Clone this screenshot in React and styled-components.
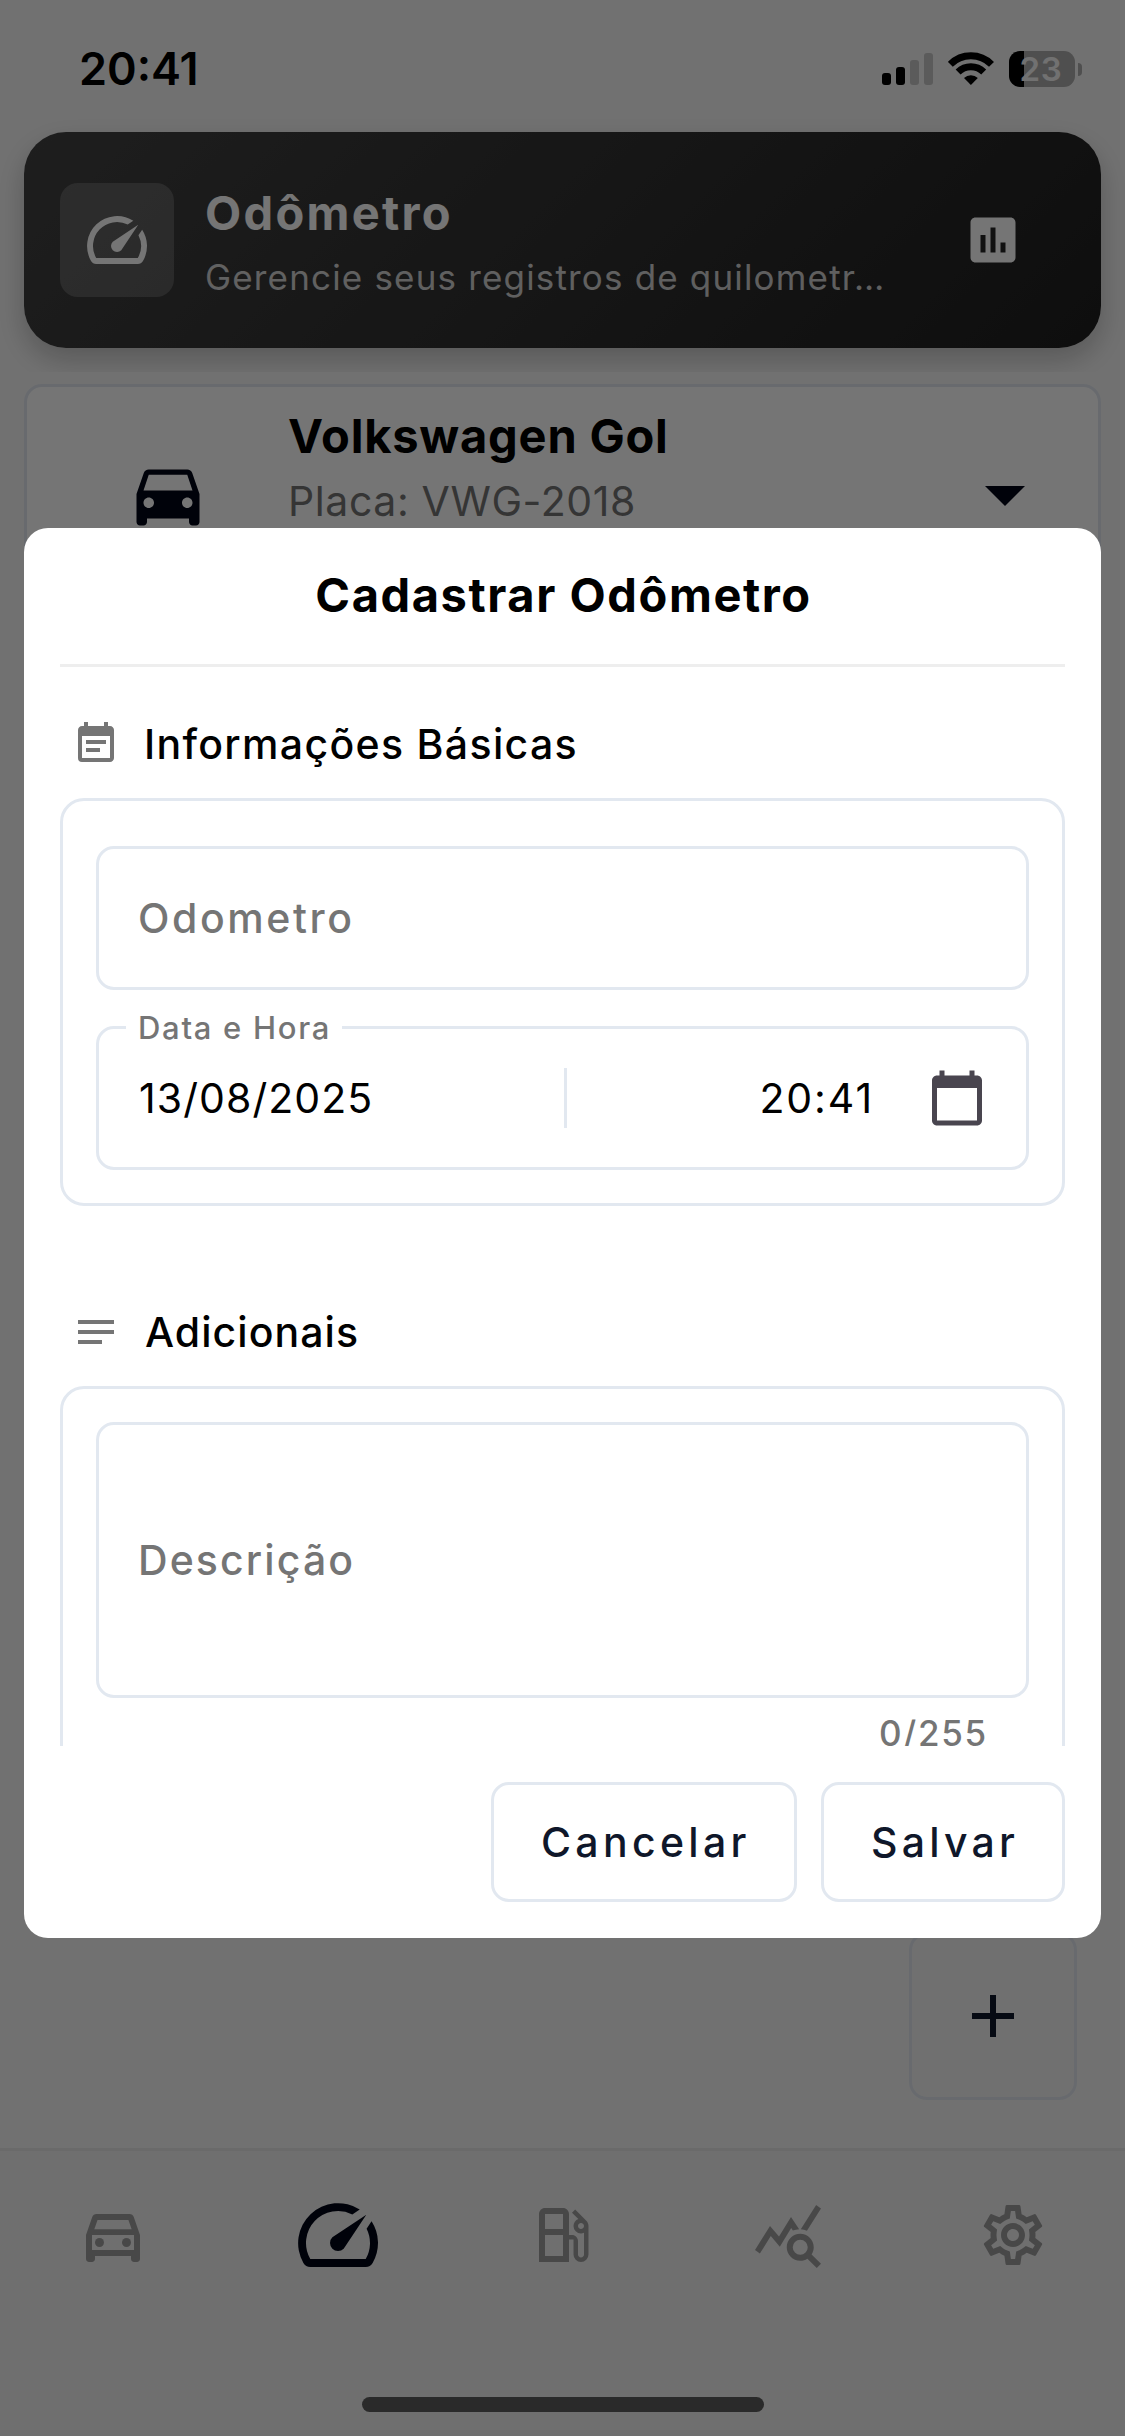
import React from "react";
import styled, { createGlobalStyle } from "styled-components";
import {
  MdSpeed,
  MdAssessment,
  MdDirectionsCar,
  MdArrowDropDown,
  MdEventNote,
  MdCalendarToday,
  MdNotes,
  MdAdd,
  MdOutlineDirectionsCar,
  MdOutlineLocalGasStation,
  MdQueryStats,
  MdOutlineSettings,
} from "react-icons/md";

const GlobalStyle = createGlobalStyle`
  *, *::before, *::after { box-sizing: border-box; }
  body { margin: 0; background: #f7f7f7; }
  svg { display: block; flex: none; }
`;

const line = "#e2e8f0";
const muted = "#757575";
const ink = "#0f172a";

const Screen = styled.div`
  position: relative;
  display: flex;
  flex-direction: column;
  width: 1125px;
  height: 2436px;
  overflow: hidden;
  background: #f7f7f7;
  font-family: Inter, "Liberation Sans", sans-serif;
`;

const Text = styled.span`
  display: block;
  white-space: nowrap;
  font-size: ${(p) => p.$size}px;
  font-weight: ${(p) => p.$weight || 400};
  line-height: ${(p) => p.$line || 60}px;
  letter-spacing: ${(p) => p.$track || 0}px;
  color: ${(p) => p.$color || "#000"};
`;

/* Status bar and page header */

const Top = styled.header`
  height: 372px;
  overflow: hidden;
`;

const StatusBar = styled.div`
  display: flex;
  align-items: center;
  justify-content: space-between;
  height: 132px;
  padding: 6px 43px 0 79px;
`;

const StatusIcons = styled.div`
  display: flex;
  align-items: center;
`;

const Signal = styled.div`
  display: flex;
  align-items: flex-end;
  gap: 5px;
  height: 32px;
  margin-right: 15px;
`;

const SignalBar = styled.span`
  width: 9px;
  height: ${(p) => p.$h}px;
  border-radius: 3px;
  background: ${(p) => (p.$on ? "#000" : "#c6c6c6")};
`;

const Battery = styled.div`
  display: flex;
  align-items: center;
  justify-content: center;
  width: 66px;
  height: 36px;
  margin-left: 15px;
  padding-right: 2px;
  border-radius: 11px;
  background: linear-gradient(to right, #000 15px, #acacac 15px);
`;

const BatteryCap = styled.span`
  width: 4px;
  height: 13px;
  margin-left: 3px;
  border-radius: 0 5px 5px 0;
  background: #acacac;
`;

const Banner = styled.section`
  display: flex;
  align-items: center;
  height: 216px;
  margin: 0 24px;
  padding: 0 78px 0 36px;
  border-radius: 42px;
  background: linear-gradient(135deg, #424242, #1f1f1f);
  box-shadow: 0 12px 29px rgba(0, 0, 0, 0.22);
  color: #fff;
`;

const BannerBadge = styled.div`
  display: grid;
  place-items: center;
  width: 114px;
  height: 114px;
  border-radius: 18px;
  background: rgba(255, 255, 255, 0.18);
`;

const BannerText = styled.div`
  flex: 1;
  margin: 11px 0 0 31px;
`;

/* Vehicle selector */

const Main = styled.main`
  flex: 1;
  padding: 12px 24px 0;
`;

const VehicleCard = styled.section`
  display: flex;
  align-items: center;
  height: 220px;
  padding: 0 45px 0 99px;
  border: 3px solid ${line};
  border-radius: 18px;
  background: #fff;
  color: #020617;
`;

const VehicleText = styled.div`
  flex: 1;
  align-self: flex-start;
  padding: 16px 0 0 78px;
`;

const Fab = styled.button`
  position: absolute;
  right: 48px;
  bottom: 336px;
  display: grid;
  place-items: center;
  width: 168px;
  height: 168px;
  padding: 0;
  border: 3px solid ${line};
  border-radius: 18px;
  background: #f4f4f4;
  color: ${ink};
`;

/* Bottom navigation */

const Nav = styled.nav`
  height: 288px;
  border-top: 3px solid #e8e8e8;
  background: #f2f2f2;
`;

const NavItems = styled.div`
  display: grid;
  grid-template-columns: repeat(5, 1fr);
  height: 168px;
`;

const NavItem = styled.div`
  display: grid;
  place-items: center;
  color: ${(p) => (p.$active ? "#020617" : "#9e9e9e")};
`;

const HomeIndicator = styled.div`
  width: 402px;
  height: 15px;
  margin: 78px auto 0;
  border-radius: 8px;
  background: #5d5d5d;
`;

/* Dialog */

const Scrim = styled.div`
  position: absolute;
  inset: 0;
  padding: 528px 24px 0;
  background: rgba(0, 0, 0, 0.54);
`;

const Dialog = styled.section`
  display: flex;
  flex-direction: column;
  height: 1410px;
  padding: 0 36px 36px;
  border-radius: 24px;
  background: #fff;
`;

const DialogHeader = styled.div`
  display: flex;
  justify-content: center;
  height: 139px;
  padding-left: 2px;
  border-bottom: 3px solid #eee;
`;

const DialogBody = styled.div`
  height: 1079px;
  padding-top: 53px;
  overflow: hidden;
`;

const SectionTitle = styled.div`
  display: flex;
  align-items: center;
  gap: ${(p) => p.$gap}px;
  height: 48px;
  margin-bottom: 30px;
  padding-left: 12px;
  color: ${muted};
`;

const SectionCard = styled.div`
  display: flex;
  flex-direction: column;
  margin-bottom: 102px;
  padding: ${(p) => p.$top}px 33px 33px;
  border: 3px solid ${line};
  border-radius: 24px;
`;

const Field = styled.div`
  position: relative;
  display: flex;
  align-items: center;
  height: ${(p) => p.$h || 144}px;
  padding: 0 39px;
  border: 3px solid ${line};
  border-radius: 18px;
  color: #49454f;

  & + & {
    margin-top: 36px;
  }
`;

const FieldLabel = styled.div`
  position: absolute;
  top: -23px;
  left: 27px;
  width: 216px;
  padding-left: 12px;
  background: #fff;
`;

const DateValue = styled.div`
  width: 426px;
  padding-left: 1px;
`;

const Separator = styled.span`
  width: 3px;
  height: 60px;
  background: ${line};
`;

const TimeValue = styled.div`
  display: flex;
  flex: 1;
  justify-content: flex-end;
  padding-right: 53px;
`;

const Counter = styled.div`
  display: flex;
  justify-content: flex-end;
  margin-top: 11px;
  padding-right: 41px;
`;

const Actions = styled.div`
  display: flex;
  justify-content: flex-end;
  gap: 24px;
  margin-top: 36px;
`;

const ActionButton = styled.button`
  width: ${(p) => p.$w}px;
  height: 120px;
  padding: 0 0 0 47px;
  border: 3px solid ${line};
  border-radius: 18px;
  background: #fff;
  font-family: inherit;
  text-align: left;
`;

function WifiIcon() {
  return (
    <svg width="46" height="34" viewBox="0 0 46 34" fill="none" stroke="#000" strokeWidth="7">
      <path d="M2.3 12.4a29 29 0 0 1 41.2 0" />
      <path d="M10.1 20.1a18.2 18.2 0 0 1 25.6 0" />
      <path d="M22.9 33l-6.9-7a9.8 9.8 0 0 1 13.8 0z" fill="#000" stroke="none" />
    </svg>
  );
}

export default function App() {
  return (
    <Screen>
      <GlobalStyle />
      <Top>
        <StatusBar>
          <Text $size={45} $weight={600}>20:41</Text>
          <StatusIcons>
            <Signal>
              <SignalBar $h={12} $on />
              <SignalBar $h={18} $on />
              <SignalBar $h={25} />
              <SignalBar $h={32} />
            </Signal>
            <WifiIcon />
            <Battery>
              <Text $size={33} $weight={600} $line={36} $track={0.8} $color="#f7f7f7">23</Text>
            </Battery>
            <BatteryCap />
          </StatusIcons>
        </StatusBar>
        <Banner>
          <BannerBadge>
            <MdSpeed size={72} />
          </BannerBadge>
          <BannerText>
            <Text $size={47} $weight={700} $line={64} $track={2.3} $color="#fff">Odômetro</Text>
            <Text $size={35} $line={65} $track={1.17} $color="rgba(255, 255, 255, 0.78)">
              Gerencie seus registros de quilometr…
            </Text>
          </BannerText>
          <MdAssessment size={60} />
        </Banner>
      </Top>

      <Main>
        <VehicleCard>
          <MdDirectionsCar size={84} />
          <VehicleText>
            <Text $size={47} $weight={700} $line={66} $track={0.8}>Volkswagen Gol</Text>
            <Text $size={41} $line={65} $track={0.6} $color={muted}>Placa: VWG-2018</Text>
          </VehicleText>
          <MdArrowDropDown size={96} />
        </VehicleCard>
      </Main>

      <Fab>
        <MdAdd size={72} />
      </Fab>

      <Nav>
        <NavItems>
          <NavItem><MdOutlineDirectionsCar size={72} /></NavItem>
          <NavItem $active><MdSpeed size={96} /></NavItem>
          <NavItem><MdOutlineLocalGasStation size={72} /></NavItem>
          <NavItem><MdQueryStats size={72} /></NavItem>
          <NavItem><MdOutlineSettings size={72} /></NavItem>
        </NavItems>
        <HomeIndicator />
      </Nav>

      <Scrim>
        <Dialog>
          <DialogHeader>
            <Text $size={47} $weight={700} $line={134} $track={1.57}>Cadastrar Odômetro</Text>
          </DialogHeader>

          <DialogBody>
            <SectionTitle $gap={24}>
              <MdEventNote size={48} />
              <Text $size={41} $weight={500} $track={1.33}>Informações Básicas</Text>
            </SectionTitle>
            <SectionCard $top={45}>
              <Field>
                <Text $size={41} $weight={500} $track={2.6} $color={muted}>Odometro</Text>
              </Field>
              <Field>
                <FieldLabel>
                  <Text $size={31} $weight={500} $line={44} $track={1.7} $color={muted}>Data e Hora</Text>
                </FieldLabel>
                <DateValue>
                  <Text $size={41} $track={1.08}>13/08/2025</Text>
                </DateValue>
                <Separator />
                <TimeValue>
                  <Text $size={41} $track={1.9}>20:41</Text>
                </TimeValue>
                <MdCalendarToday size={60} />
              </Field>
            </SectionCard>

            <SectionTitle $gap={25}>
              <MdNotes size={48} />
              <Text $size={41} $weight={500} $track={1.05}>Adicionais</Text>
            </SectionTitle>
            <SectionCard $top={33}>
              <Field $h={276}>
                <Text $size={41} $weight={500} $track={2.1} $color={muted}>Descrição</Text>
              </Field>
              <Counter>
                <Text $size={35} $weight={500} $line={48} $track={1.75} $color={muted}>0/255</Text>
              </Counter>
            </SectionCard>
          </DialogBody>

          <Actions>
            <ActionButton $w={306}>
              <Text $size={41} $weight={500} $track={4.3} $color={ink}>Cancelar</Text>
            </ActionButton>
            <ActionButton $w={244}>
              <Text $size={41} $weight={500} $track={4.2} $color={ink}>Salvar</Text>
            </ActionButton>
          </Actions>
        </Dialog>
      </Scrim>
    </Screen>
  );
}
